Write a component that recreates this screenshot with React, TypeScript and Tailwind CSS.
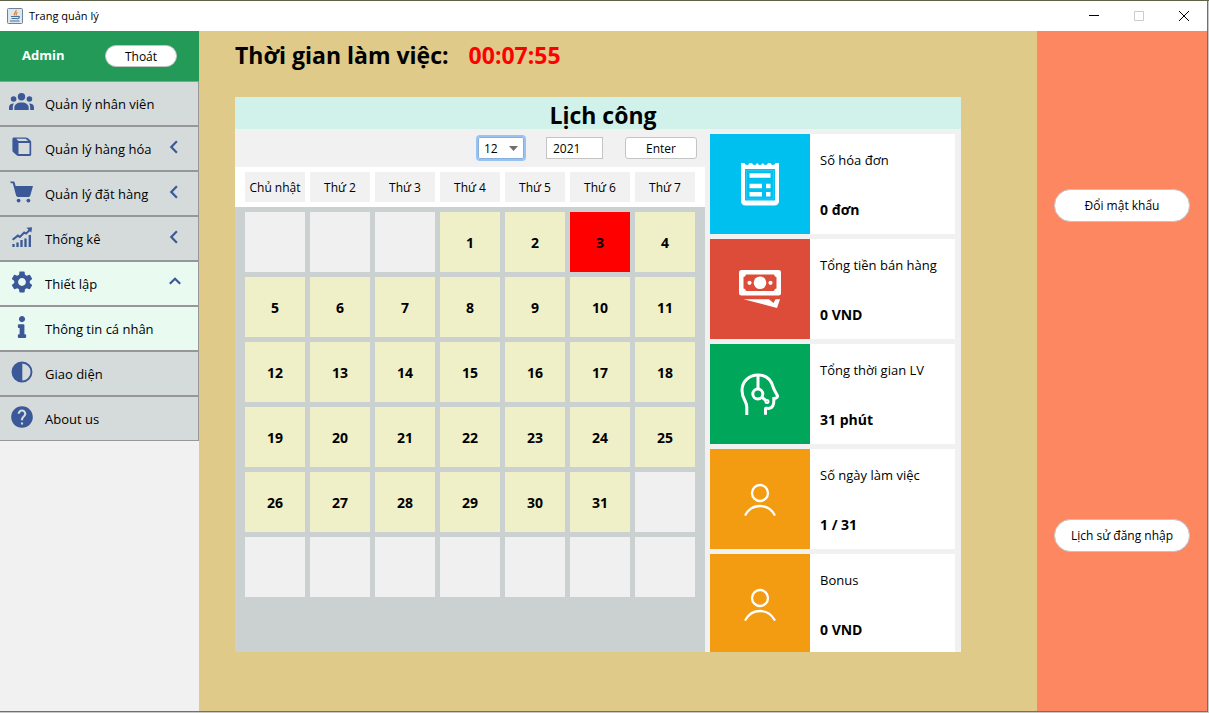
import type { ReactNode } from 'react';
import { FaInfo } from 'react-icons/fa';
import { MdHelp, MdSettings } from 'react-icons/md';

const JavaIcon = () => (
  <svg width="16" height="16" viewBox="0 0 16 16" aria-hidden="true">
    <rect x="0.5" y="0.5" width="15" height="15" rx="1" fill="#dfe7ee" stroke="#6d8296" />
    <path d="M9 2c1 2-3 3-1.500 5.500M10.500 4.500C8.500 5.500 9 6.500 9.500 7.500" fill="none" stroke="#e5802e" strokeWidth="1.300" />
    <path d="M4 8.500h6.500M4.500 10.500h5.500M10.500 8.500c3-.5 2 2-.5 2.500M3 13h9.500" fill="none" stroke="#46739c" strokeWidth="1.200" />
  </svg>
);

const PeopleIcon = () => (
  <svg width="26" height="18" viewBox="0 0 26 18" fill="currentColor" aria-hidden="true">
    <circle cx="12.500" cy="3.800" r="3.700" />
    <circle cx="4.600" cy="6" r="2.800" />
    <circle cx="20.400" cy="6" r="2.800" />
    <path d="M5.300 17v-2c0-3.600 2.800-5.500 7.200-5.500s7.200 1.900 7.200 5.500v2z" />
    <path d="M0 17v-2.500C0 12 1.500 10.800 5 10.600 4 12 3.800 13 3.800 15v2z" />
    <path d="M25 17v-2.500c0-2.500-1.500-3.700-5-3.900 1 1.400 1.200 2.400 1.200 4.400v2z" />
  </svg>
);

const BoxIcon = () => (
  <svg width="20" height="20" viewBox="0 0 20 20" aria-hidden="true">
    <path
      fill="currentColor"
      fillRule="evenodd"
      d="M2 .4h11.500c1 0 1.800.3 2.500.9l2.400 2.200c.5.5.8 1 .8 1.700v12.400c0 .8-.6 1.400-1.400 1.400H6.500c-.7 0-1.400-.3-1.900-.8L1 14.900c-.4-.4-.6-.9-.6-1.500V2C.4 1 1 .4 2 .4zM4.200 1.800l2.300 2.100h9.800l-2.200-1.700c-.3-.3-.7-.4-1.100-.4zM6.500 6v11h11V6z"
    />
  </svg>
);

const CartIcon = () => (
  <svg width="24" height="22" viewBox="0 0 24 22" fill="currentColor" aria-hidden="true">
    <path d="M0 .5h3.200c.8 0 1.300.3 1.500 1.100L5.600 5H23l-2.700 9.600c-.3.900-.8 1.400-1.700 1.400H8c-1 0-1.600-.5-1.900-1.400L2.800 2.300H1z" />
    <circle cx="8.600" cy="19.600" r="1.900" />
    <circle cx="18.400" cy="19.600" r="1.900" />
  </svg>
);

const ChartIcon = () => (
  <svg width="21" height="21" viewBox="0 0 21 21" aria-hidden="true">
    <path d="M1.500 20v-3M5.500 20v-4.500M9.500 20v-7M13.500 20v-8.500M17.800 20V8" fill="none" stroke="currentColor" strokeWidth="2.300" />
    <path d="M.6 12.800l5.300-4.200 2 1.400 4.300-4.400 1.800 1L18 2.700" fill="none" stroke="currentColor" strokeWidth="2" />
    <path d="M14.500.8L20 .3l-.6 5.200z" fill="currentColor" />
  </svg>
);

const ContrastIcon = () => (
  <svg width="22" height="22" viewBox="0 0 22 22" aria-hidden="true">
    <circle cx="11" cy="11" r="9.500" fill="none" stroke="currentColor" strokeWidth="1.900" />
    <path d="M11.300 1v20a10 10 0 0 1 0-20z" fill="currentColor" />
  </svg>
);

const Chevron = ({ up }: { up?: boolean }) => (
  <svg width="14" height="14" viewBox="0 0 14 14" fill="none" stroke="currentColor" strokeWidth="2.200" aria-hidden="true">
    <path d={up ? 'M1.800 8.800L7 3.800l5.200 5' : 'M8.900 1.300L3.300 7l5.600 5.700'} />
  </svg>
);

const ReceiptIcon = () => (
  <svg width="38" height="43" viewBox="0 0 38 43" aria-hidden="true">
    <path
      fill="#fff"
      fillRule="evenodd"
      d="M0 0h3.500c.5 2.600 4.500 2.600 5 0h2.500c.5 2.600 4.500 2.600 5 0h6c.5 2.600 4.500 2.600 5 0h2.500c.5 2.600 4.500 2.600 5 0H38v38c0 2.800-1.800 4.500-4.500 4.500h-29C1.800 42.500 0 40.800 0 38zM4 6v31.500h30V6z"
    />
    <path d="M16.500 0c.5 2.600 4.500 2.600 5 0z" fill="#00c0ef" />
    <path d="M5.500 7.500h27V36h-27z" fill="none" stroke="#fff" strokeWidth="1" opacity=".15" />
    <path d="M8.500 12.500h21M8.500 23h12.500M25 23h4.500M8.500 31.200h12.500M25 31.200h4.500" stroke="#fff" strokeWidth="4.400" />
  </svg>
);

const MoneyIcon = () => (
  <svg width="42" height="38" viewBox="0 0 42 38" fill="#fff" aria-hidden="true">
    <path fillRule="evenodd" d="M2.500 0h37A2.500 2.500 0 0 1 42 2.500v20.500a2.500 2.500 0 0 1-2.500 2.500h-37A2.500 2.500 0 0 1 0 23V2.500A2.500 2.500 0 0 1 2.500 0zM7 4.500c-.4 1.400-1.200 2.200-2.500 2.500v11.500c1.300.3 2.100 1.100 2.500 2.500h28c.4-1.400 1.200-2.200 2.500-2.500V7C36.200 6.700 35.400 5.900 35 4.500z" />
    <circle cx="21" cy="12.800" r="6.300" />
    <circle cx="10.500" cy="12.800" r="2.100" />
    <circle cx="31.500" cy="12.800" r="2.100" />
    <path d="M4.500 29.300h25.500l4.500 3.700 2-3.700h4.500L38 38z" />
  </svg>
);

const HeadsetIcon = () => (
  <svg width="40" height="43" viewBox="0 0 40 43" fill="none" stroke="#fff" strokeWidth="3" aria-hidden="true">
    <path d="M6.800 42V34C6.800 28 2 26 2 17.500 2 8.500 9 2 18 2c8.500 0 13 4 15.300 12.500.6 2.300 2.700 5 4.200 8.300.3 1.800-1.700 2.500-3.700 2.800.3 4-.3 8.700-4.300 9.700-1.500.4-4-.5-4 .5v6" />
    <path d="M18 2v13.500M21.500 24l5 4" />
    <circle cx="17.800" cy="21" r="5" />
    <circle cx="27" cy="28.500" r="1" />
  </svg>
);

const PersonIcon = () => (
  <svg width="32" height="33" viewBox="0 0 32 33" fill="none" stroke="#fff" strokeWidth="2.300" strokeLinecap="round" aria-hidden="true">
    <circle cx="16" cy="10" r="8" />
    <path d="M1.500 31.700C4.500 26.500 9.500 23 16 23s11.500 3.500 14.500 8.700" />
  </svg>
);

type MenuItem = { label: string; icon: ReactNode; chevron?: 'left' | 'up'; active?: boolean };

const menu: MenuItem[] = [
  { label: 'Quản lý nhân viên', icon: <PeopleIcon /> },
  { label: 'Quản lý hàng hóa', icon: <BoxIcon />, chevron: 'left' },
  { label: 'Quản lý đặt hàng', icon: <CartIcon />, chevron: 'left' },
  { label: 'Thống kê', icon: <ChartIcon />, chevron: 'left' },
  { label: 'Thiết lập', icon: <MdSettings size={26} />, chevron: 'up', active: true },
  { label: 'Thông tin cá nhân', icon: <FaInfo size={22} />, active: true },
  { label: 'Giao diện', icon: <ContrastIcon /> },
  { label: 'About us', icon: <MdHelp size={26} /> },
];

const stats = [
  { label: 'Số hóa đơn', value: '0 đơn', color: 'bg-[#00c0ef]', icon: <ReceiptIcon /> },
  { label: 'Tổng tiền bán hàng', value: '0 VND', color: 'bg-[#dd4b39]', icon: <MoneyIcon /> },
  { label: 'Tổng thời gian LV', value: '31 phút', color: 'bg-[#00a65a]', icon: <HeadsetIcon /> },
  { label: 'Số ngày làm việc', value: '1 / 31', color: 'bg-[#f39c12]', icon: <PersonIcon /> },
  { label: 'Bonus', value: '0 VND', color: 'bg-[#f39c12]', icon: <PersonIcon /> },
];

const weekdays = ['Chủ nhật', 'Thứ 2', 'Thứ 3', 'Thứ 4', 'Thứ 5', 'Thứ 6', 'Thứ 7'];
const FIRST_WEEKDAY = 3;
const DAYS = 31;
const TODAY = 3;
const weeks = Array.from({ length: 6 }, (_, w) =>
  Array.from({ length: 7 }, (_, d) => {
    const day = w * 7 + d - FIRST_WEEKDAY + 1;
    return day >= 1 && day <= DAYS ? day : null;
  }),
);

function TitleBar() {
  return (
    <header className="flex h-[30px] shrink-0 items-center bg-white pl-[7px] text-black">
      <JavaIcon />
      <h1 className="ml-[6px] flex-1 text-[11px]">Trang quản lý</h1>
      <button aria-label="Minimize" className="flex h-full w-[45px] items-center justify-center">
        <svg width="10" height="10" aria-hidden="true"><path d="M0 4.500h10" stroke="#000" /></svg>
      </button>
      <button aria-label="Maximize" disabled className="flex h-full w-[45px] items-center justify-center">
        <svg width="10" height="10" aria-hidden="true"><path d="M.5.5h9v9h-9z" fill="none" stroke="#ccc" /></svg>
      </button>
      <button aria-label="Close" className="flex h-full w-[46px] items-center justify-center">
        <svg width="10" height="10" aria-hidden="true"><path d="M0 0l10 10M10 0L0 10" stroke="#000" /></svg>
      </button>
    </header>
  );
}

function Sidebar() {
  return (
    <aside className="w-[199px] shrink-0 bg-[#f1f1f1]">
      <div className="flex h-[50px] items-center justify-between bg-[#249a58] px-[22px]">
        <span className="text-[13px] font-bold text-white">Admin</span>
        <button className="h-[22px] w-[72px] rounded-full border border-[#c4c4c4] bg-white pt-px text-xs leading-5">Thoát</button>
      </div>
      <nav>
        {menu.map((item) => (
          <button
            key={item.label}
            className={`flex h-[45px] w-full items-center border border-l-0 border-[#97979a] pr-4 text-left text-[13px] ${item.active ? 'bg-[#e9faf0]' : 'bg-[#d5dbdb]'}`}
          >
            <span className="flex h-full w-[45px] shrink-0 items-center justify-center pr-px pb-[3px] text-[#3b5998]">{item.icon}</span>
            <span className="flex-1 pt-[3px] whitespace-nowrap">{item.label}</span>
            {item.chevron && (
              <span className="pb-[3px] text-[#3b5998]"><Chevron up={item.chevron === 'up'} /></span>
            )}
          </button>
        ))}
      </nav>
    </aside>
  );
}

function Calendar() {
  return (
    <div className="flex w-[470px] flex-col">
      <form className="flex h-[38px] items-center justify-end gap-[22px] pr-2 text-xs" onSubmit={(e) => e.preventDefault()}>
        <div className="relative">
          <select
            aria-label="Tháng"
            defaultValue="12"
            className="block h-[22px] w-[46px] appearance-none rounded-[2px] border border-[#87afda] bg-white pt-px pl-[5px] outline-2 outline-[#97c3f3]"
          >
            {Array.from({ length: 12 }, (_, i) => (
              <option key={i}>{i + 1}</option>
            ))}
          </select>
          <svg width="9" height="5" className="pointer-events-none absolute top-[9px] right-[6px]" aria-hidden="true">
            <path d="M0 0h9L4.500 5z" fill="#6e6e6e" />
          </svg>
        </div>
        <input aria-label="Năm" defaultValue="2021" className="h-[22px] w-[57px] border border-[#c4c4c4] bg-white px-[6px] pt-px outline-none" />
        <button className="h-[22px] w-[72px] rounded-[3px] border border-[#c4c4c4] bg-white pt-px">Enter</button>
      </form>
      <table className="flex flex-1 flex-col bg-[#cbd1d1]">
        <thead className="block bg-white px-[10px] py-[5px]">
          <tr className="grid grid-cols-7 gap-[5px]">
            {weekdays.map((d) => (
              <th key={d} className="flex h-[30px] items-center justify-center bg-[#f1f1f1] pt-[2px] text-xs font-normal whitespace-nowrap">{d}</th>
            ))}
          </tr>
        </thead>
        <tbody className="flex flex-col gap-[5px] px-[10px] pt-[5px]">
          {weeks.map((week, w) => (
            <tr key={w} className="grid grid-cols-7 gap-[5px]">
              {week.map((day, d) => (
                <td
                  key={d}
                  className={`flex h-[60px] items-center justify-center pt-[2px] text-sm font-bold ${day === null ? 'bg-[#f0f0f0]' : day === TODAY ? 'bg-[#ff0000]' : 'bg-[#efefc8]'}`}
                >
                  {day}
                </td>
              ))}
            </tr>
          ))}
        </tbody>
      </table>
    </div>
  );
}

function Stats() {
  return (
    <div className="flex min-w-0 flex-1 flex-col gap-[5px] pt-[5px] pr-[6px] pl-[5px]">
      {stats.map((s) => (
        <section key={s.label} className="flex h-[100px] shrink-0 bg-white">
          <div className={`flex w-[100px] shrink-0 items-center justify-center ${s.color}`}>{s.icon}</div>
          <div className="flex flex-col gap-[30px] pt-[16px] pl-[10px] leading-5 whitespace-nowrap">
            <h3 className="text-[13px] leading-5">{s.label}</h3>
            <p className="text-sm leading-5 font-bold">{s.value}</p>
          </div>
        </section>
      ))}
    </div>
  );
}

export default function App() {
  return (
    <div className="flex min-h-screen border-t border-t-[#5f6347] bg-[#c8c8c8] pr-px pb-px font-['Open_Sans','Noto_Sans',sans-serif] text-black">
      <div className="flex flex-1 flex-col border-r border-b border-[#70706c]">
        <TitleBar />
        <div className="flex flex-1">
          <Sidebar />
          <main className="min-w-0 flex-1 bg-[#dfca8a] px-9 pt-[8px]">
            <h2 className="flex gap-5 text-[23px] leading-8 font-bold whitespace-nowrap">
              <span>Thời gian làm việc:</span>
              <time className="text-[#ff0000]">00:07:55</time>
            </h2>
            <section className="mt-[26px] w-[726px] bg-[#f1f1f1]">
              <h2 className="h-8 bg-[#d1f2eb] pt-[2px] pl-[10px] text-center text-[23px] leading-8 font-bold">Lịch công</h2>
              <div className="flex h-[523px] overflow-hidden">
                <Calendar />
                <Stats />
              </div>
            </section>
          </main>
          <aside className="flex w-[170px] shrink-0 flex-col items-center gap-[297px] bg-[#fc8760] pt-[158px]">
            <button className="h-[33px] w-[136px] rounded-full border border-[#c4c4c4] bg-white text-xs">Đổi mật khẩu</button>
            <button className="h-[33px] w-[136px] rounded-full border border-[#c4c4c4] bg-white text-xs">Lịch sử đăng nhập</button>
          </aside>
        </div>
      </div>
    </div>
  );
}
